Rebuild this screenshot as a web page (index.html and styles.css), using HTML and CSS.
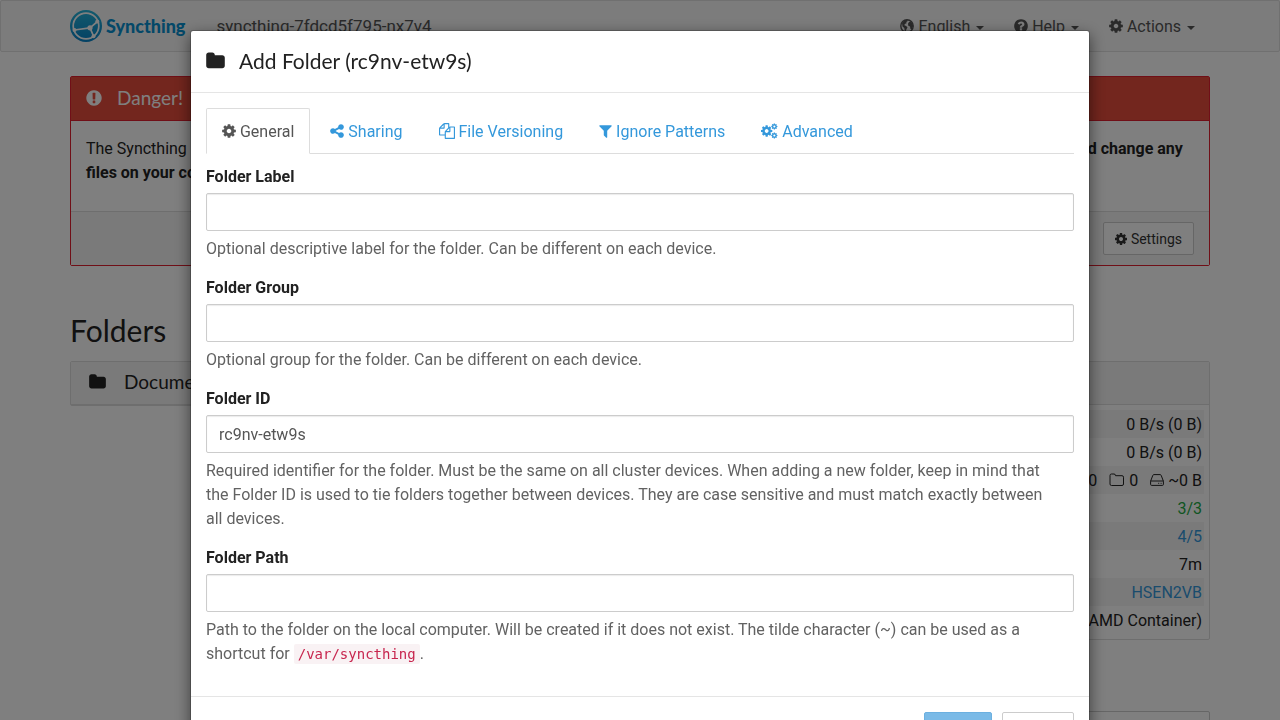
FILE: index.html
```html
<!DOCTYPE html>
<html lang="en">
<head>
	<meta charset="UTF-8">
	<meta name="viewport" content="width=device-width, initial-scale=1">
	<title>Syncthing</title>
	<link rel="stylesheet" href="styles.css">
</head>
<body>
	<!-- icons -->
	<svg class="sprite" aria-hidden="true">
		<linearGradient id="logo-fill" x1="0" y1="0" x2="0" y2="1">
			<stop offset="0" stop-color="#26b6db"/>
			<stop offset="1" stop-color="#0882c8"/>
		</linearGradient>
		<symbol id="cog" viewBox="128 0 1536 1792">
			<path id="cog-path" d="M1152 896q0-106-75-181t-181-75-181 75-75 181 75 181 181 75 181-75 75-181zm512-109v222q0 12-8 23t-20 13l-185 28q-19 54-39 91 35 50 107 138 10 12 10 25t-9 23q-27 37-99 108t-94 71q-12 0-26-9l-138-108q-44 23-91 38-16 136-29 186-7 28-36 28h-222q-14 0-24.5-8.5t-11.5-21.5l-28-184q-49-16-90-37l-141 107q-10 9-25 9-14 0-25-11-126-114-165-168-7-10-7-23 0-12 8-23 15-21 51-66.5t54-70.5q-27-50-41-99l-183-27q-13-2-21-12.5t-8-23.5v-222q0-12 8-23t19-13l186-28q14-46 39-92-40-57-107-138-10-12-10-24 0-10 9-23 26-36 98.5-107.5t94.5-71.5q13 0 26 10l138 107q44-23 91-38 16-136 29-186 7-28 36-28h222q14 0 24.5 8.5t11.5 21.5l28 184q49 16 90 37l142-107q9-9 24-9 13 0 25 10 129 119 165 170 7 8 7 22 0 12-8 23-15 21-51 66.5t-54 70.5q26 50 41 98l183 28q13 2 21 12.5t8 23.5z"/>
		</symbol>
		<symbol id="cogs" viewBox="0 0 1920 1792">
			<use href="#cog-path" transform="translate(-106 152) scale(.83)"/>
			<use href="#cog-path" transform="translate(1105 -20) scale(.45)"/>
			<use href="#cog-path" transform="translate(1105 1000) scale(.45)"/>
		</symbol>
		<symbol id="share" viewBox="128 0 1536 1792">
			<path d="M1344 1024q133 0 226.500 93.500t93.500 226.500-93.500 226.500-226.500 93.500-226.500-93.500-93.500-226.500q0-12 2-34l-360-180q-92 86-218 86-133 0-226.500-93.500t-93.500-226.500 93.500-226.500 226.500-93.500q126 0 218 86l360-180q-2-22-2-34 0-133 93.500-226.500t226.500-93.500 226.500 93.500 93.500 226.500-93.500 226.500-226.500 93.500q-126 0-218-86l-360 180q2 22 2 34t-2 34l360 180q92-86 218-86z"/>
		</symbol>
		<symbol id="copy" viewBox="0 0 1792 1792">
			<path d="M1696 384q40 0 68 28t28 68v1216q0 40-28 68t-68 28h-960q-40 0-68-28t-28-68v-288h-544q-40 0-68-28t-28-68v-672q0-40 20-88t48-76l408-408q28-28 76-48t88-20h416q40 0 68 28t28 68v328q68-40 128-40h416zm-544 213l-299 299h299v-299zm-640-384l-299 299h299v-299zm196 647l316-316v-416h-384v416q0 40-28 68t-68 28h-416v640h512v-256q0-40 20-88t48-76zm956 804v-1152h-384v416q0 40-28 68t-68 28h-416v640h896z"/>
		</symbol>
		<symbol id="filter" viewBox="192 0 1408 1792">
			<path d="M1595 295q17 41-14 70l-493 493v742q0 42-39 59-13 5-25 5-27 0-45-19l-256-256q-19-19-19-45v-486l-493-493q-31-29-14-70 17-39 59-39h1280q42 0 59 39z"/>
		</symbol>
		<symbol id="question" viewBox="128 0 1536 1792">
			<path d="M1024 1376v-192q0-14-9-23t-23-9h-192q-14 0-23 9t-9 23v192q0 14 9 23t23 9h192q14 0 23-9t9-23zm256-672q0-88-55.500-163t-138.500-116-170-41q-243 0-371 213-15 24 8 42l132 100q7 6 19 6 16 0 25-12 53-68 86-92 34-24 86-24 48 0 85.500 26t37.500 59q0 38-20 61t-68 45q-63 28-115.500 86.500t-52.500 125.500v36q0 14 9 23t23 9h192q14 0 23-9t9-23q0-19 21.500-49.500t54.500-49.500q32-18 49-28.500t46-35 44.500-48 28-60.500 12.500-81zm384 192q0 209-103 385.500t-279.500 279.500-385.500 103-385.500-103-279.500-279.500-103-385.500 103-385.500 279.500-279.500 385.500-103 385.500 103 279.500 279.500 103 385.500z"/>
		</symbol>
		<symbol id="exclamation" viewBox="128 0 1536 1792">
			<path d="M896 128q209 0 385.500 103t279.500 279.500 103 385.500-103 385.500-279.500 279.500-385.500 103-385.500-103-279.500-279.500-103-385.500 103-385.500 279.500-279.500 385.500-103zm128 1247v-190q0-14-9-23.500t-22-9.500h-192q-13 0-23 10t-10 23v190q0 13 10 23t23 10h192q13 0 22-9.500t9-23.500zm-2-344l18-621q0-12-10-18-10-8-24-8h-220q-14 0-24 8-10 6-10 18l17 621q0 10 10 17.500t24 7.500h185q14 0 23.500-7.500t10.500-17.500z"/>
		</symbol>
		<symbol id="folder" viewBox="64 0 1664 1792">
			<path d="M1728 608v704q0 92-66 158t-158 66h-1216q-92 0-158-66t-66-158v-960q0-92 66-158t158-66h320q92 0 158 66t66 158v32h672q92 0 158 66t66 158z"/>
		</symbol>
		<symbol id="globe" viewBox="0 0 14 16">
			<circle cx="7" cy="8" r="6.200" fill="none" stroke="currentColor" stroke-width="1.400"/>
			<path d="M2 5l2.500-2.800 2.700-.4.600 1.200-1.500 1 .3 1.200-1.800.7-.4 1.300 1.700.8 1.400 1.200-.9 1.700-.9 2.300-1-.3-.4-2.900-1.800-1.400zM8.800 4.200l1.800-1 2 2.600.6 2.200-1.500 3.500-1.300-.8-.4-2.300-1.700-.6-.3-2z"/>
		</symbol>
		<symbol id="folder-open" viewBox="0 0 16 16">
			<path d="M1 3.500q0-1.500 1.500-1.500h2.500q1.500 0 1.500 1.700h6.500q1.500 0 1.500 1.500v6.800q0 1.500-1.500 1.500h-10.500q-1.500 0-1.500-1.500z" fill="none" stroke="currentColor"/>
		</symbol>
		<symbol id="disk" viewBox="0 0 14 16">
			<path d="M.6 9.200l2.200-5.800q.3-.8 1.200-.8h6q.9 0 1.200.8l2.200 5.800v3.200q0 1-1 1h-10.800q-1 0-1-1zM.6 9h12.800M8.200 11.300h1M10.600 11.300h1" fill="none" stroke="currentColor"/>
		</symbol>
	</svg>

	<!-- top bar -->
	<nav class="navbar">
		<div class="container">
			<a class="brand" href="#">
				<svg class="logo" viewBox="0 0 32 32" aria-hidden="true">
					<circle cx="16" cy="16" r="16" fill="url(#logo-fill)"/>
					<circle cx="16" cy="16" r="12.800" fill="none" stroke="#fff" stroke-width="1.700"/>
					<path d="M20 17.800L27.500 11.500M20 17.800L23.500 26M20 17.800L4.500 20" fill="none" stroke="#fff" stroke-width="1.700"/>
					<circle cx="20" cy="17.800" r="2.600" fill="#fff"/>
					<circle cx="27.300" cy="11.500" r="2" fill="#fff"/>
					<circle cx="23.500" cy="26.200" r="2" fill="#fff"/>
					<circle cx="4.500" cy="20" r="2" fill="#fff"/>
				</svg>
				<span>Syncthing</span>
			</a>
			<p class="device-name">syncthing-7fdcd5f795-nx7v4</p>
			<ul class="nav">
				<li><a href="#"><svg class="icon"><use href="#globe"/></svg> English <b class="caret"></b></a></li>
				<li><a href="#"><svg class="icon"><use href="#question"/></svg> Help <b class="caret"></b></a></li>
				<li><a href="#"><svg class="icon"><use href="#cog"/></svg> Actions <b class="caret"></b></a></li>
			</ul>
		</div>
	</nav>

	<main class="container">
		<section class="panel panel-danger">
			<h3 class="panel-heading"><svg class="icon"><use href="#exclamation"/></svg>Danger!</h3>
			<div class="panel-body">
				<p>The Syncthing admin interface is configured to allow remote access without a valid password. <strong>This can easily give hackers access to read and change any files on your computer.</strong></p>
			</div>
			<div class="panel-footer">
				<button type="button" class="btn btn-sm"><svg class="icon"><use href="#cog"/></svg> Settings</button>
			</div>
		</section>

		<div class="row">
			<section>
				<h2>Folders</h2>
				<div class="panel">
					<h3 class="panel-heading"><svg class="icon icon-fw"><use href="#folder"/></svg>Documents</h3>
				</div>
			</section>
			<section>
				<h2>This Device</h2>
				<div class="panel">
					<h3 class="panel-heading">syncthing</h3>
					<table class="stats">
						<tr><th>Download Rate</th><td>0 B/s (0 B)</td></tr>
						<tr><th>Upload Rate</th><td>0 B/s (0 B)</td></tr>
						<tr>
							<th>Local State (Total)</th>
							<td>
								<span>0</span>
								<span><svg class="icon icon-wide"><use href="#folder-open"/></svg> 0</span>
								<span><svg class="icon"><use href="#disk"/></svg> ~0 B</span>
							</td>
						</tr>
						<tr><th>Listeners</th><td class="success">3/3</td></tr>
						<tr><th>Discovery</th><td><a href="#">4/5</a></td></tr>
						<tr><th>Uptime</th><td>7m</td></tr>
						<tr><th>Identification</th><td><a href="#">HSEN2VB</a></td></tr>
						<tr><th>Version</th><td>Linux (64-bit Intel/AMD Container)</td></tr>
					</table>
				</div>
				<h2>Remote Devices</h2>
				<div class="actions">
					<button type="button" class="btn">Add Remote Device</button>
				</div>
			</section>
		</div>
	</main>

	<!-- add folder dialog -->
	<div class="backdrop">
		<form class="modal" role="dialog" aria-labelledby="modal-title">
			<h4 class="modal-header" id="modal-title"><svg class="icon"><use href="#folder"/></svg>Add Folder (rc9nv-etw9s)</h4>
			<div class="modal-body">
				<ul class="tabs">
					<li><a class="active" href="#"><svg class="icon"><use href="#cog"/></svg> General</a></li>
					<li><a href="#"><svg class="icon"><use href="#share"/></svg> Sharing</a></li>
					<li><a href="#"><svg class="icon icon-wide"><use href="#copy"/></svg> File Versioning</a></li>
					<li><a href="#"><svg class="icon icon-slim"><use href="#filter"/></svg> Ignore Patterns</a></li>
					<li><a href="#"><svg class="icon icon-cogs"><use href="#cogs"/></svg> Advanced</a></li>
				</ul>
				<div class="form-group">
					<label for="folder-label">Folder Label</label>
					<input id="folder-label" type="text">
					<p>Optional descriptive label for the folder. Can be different on each device.</p>
				</div>
				<div class="form-group">
					<label for="folder-group">Folder Group</label>
					<input id="folder-group" type="text">
					<p>Optional group for the folder. Can be different on each device.</p>
				</div>
				<div class="form-group">
					<label for="folder-id">Folder ID</label>
					<input id="folder-id" type="text" value="rc9nv-etw9s">
					<p>Required identifier for the folder. Must be the same on all cluster devices. When adding a new folder, keep in mind that the Folder ID is used to tie folders together between devices. They are case sensitive and must match exactly between all devices.</p>
				</div>
				<div class="form-group">
					<label for="folder-path">Folder Path</label>
					<input id="folder-path" type="text">
					<p>Path to the folder on the local computer. Will be created if it does not exist. The tilde character (~) can be used as a shortcut for <code>/var/syncthing</code>.</p>
				</div>
			</div>
			<div class="modal-footer">
				<button type="button" class="btn btn-primary" disabled>Save</button>
				<button type="button" class="btn">Close</button>
			</div>
		</form>
	</div>
</body>
</html>
```

FILE: styles.css
```css
* {
	box-sizing: border-box;
}
body, ul, p, h2, h3, h4 {
	margin: 0;
	padding: 0;
}
body {
	font: 16px/24px Roboto, "Liberation Sans", sans-serif;
	color: #222;
	background: #fff;
	height: 100vh;
	overflow: hidden;
}
ul {
	list-style: none;
}
a {
	color: #3498db;
	text-decoration: none;
}
h2, h3, h4 {
	font-family: Lato, sans-serif;
	font-weight: 400;
}
.sprite {
	position: absolute;
	width: 0;
	height: 0;
}
.icon {
	width: 14px;
	height: 16px;
	fill: currentColor;
	vertical-align: -2px;
}
.icon-wide {
	width: 16px;
}
.icon-slim {
	width: 13px;
}
.icon-cogs {
	width: 17px;
}
.container {
	max-width: 1170px;
	margin: 0 auto;
	padding: 0 15px;
}

/* top bar */
.navbar {
	background: #f8f8f8;
	border: 1px solid #e0e0e0;
	border-radius: 2px;
	margin-bottom: 24px;
}
.navbar .container {
	display: flex;
	align-items: center;
	height: 50px;
}
.brand {
	display: flex;
	align-items: center;
	gap: 4px;
	color: #0891d1;
	font: 900 18px/24px Lato, sans-serif;
}
.logo {
	width: 32px;
	height: 32px;
}
.device-name {
	margin-left: 31px;
	font-size: 17px;
	color: #555;
}
.nav {
	display: flex;
	margin-left: auto;
}
.nav a {
	display: block;
	padding: 14px 15px 12px;
	color: #555;
}
.caret {
	display: inline-block;
	margin-left: 2px;
	border: 4px solid transparent;
	border-top-color: currentColor;
	border-bottom: 0;
	vertical-align: middle;
}

/* panels */
.panel {
	border: 1px solid #ddd;
	border-radius: 2px;
	margin-bottom: 24px;
}
.panel-heading {
	display: flex;
	align-items: center;
	gap: 15px;
	height: 43px;
	padding: 0 15px 2px;
	font-size: 19px;
	background: #f5f5f5;
	border-bottom: 1px solid #ddd;
}
.panel-heading .icon {
	width: 16px;
	height: 18px;
}
.panel-heading .icon-fw {
	width: 23px;
}
.panel-danger {
	border-color: #e01e2e;
}
.panel-danger .panel-heading {
	height: 44px;
	color: #fff;
	background: #e74c3c;
	border-color: #e01e2e;
}
.panel-body {
	padding: 16px 15px 26px;
}
.panel-body p {
	min-height: 48px;
}
.panel-footer {
	display: flex;
	justify-content: flex-end;
	padding: 10px 15px;
	background: #f5f5f5;
	border-top: 1px solid #ddd;
}
.btn {
	height: 38px;
	padding: 0 15px;
	font: inherit;
	color: #555;
	background: #fff;
	border: 1px solid #ccc;
	border-radius: 2px;
}
.btn-sm {
	height: 33px;
	padding: 0 11px;
	font-size: 14px;
	color: #333;
}
.btn-sm .icon {
	width: 12px;
	height: 14px;
}
.btn-primary {
	padding: 0 16px;
	color: #fff;
	background: #7abae7;
	border-color: #6cb0e0;
}
.row {
	display: grid;
	grid-template-columns: 1fr 1fr;
	gap: 30px;
	margin-top: 48px;
}
.actions {
	display: flex;
	justify-content: flex-end;
}
h2 {
	margin-bottom: 15px;
	font-size: 30px;
	line-height: 32px;
}
.stats {
	width: calc(100% - 10px);
	margin: 5px;
	border-collapse: collapse;
}
.stats tr:nth-child(odd) {
	background: #f5f5f5;
}
.stats th, .stats td {
	padding: 3px 2px 1px;
	font-weight: 400;
	text-align: left;
}
.stats td {
	text-align: right;
}
.stats span {
	margin-left: 8px;
}
.success {
	color: #22aa44;
}

/* dialog */
.backdrop {
	position: fixed;
	inset: 0;
	padding: 30px 10px;
	background: rgba(0, 0, 0, .5);
	overflow-y: auto;
	scrollbar-width: none;
}
.modal {
	max-width: 900px;
	margin: 0 auto;
	background: #fff;
	background-clip: padding-box;
	border: 1px solid rgba(0, 0, 0, .2);
	border-radius: 3px;
	box-shadow: 0 5px 15px rgba(0, 0, 0, .5);
}
.modal-header {
	display: flex;
	align-items: center;
	gap: 14px;
	padding: 14px 15px 16px;
	font-size: 21px;
	line-height: 31px;
	border-bottom: 1px solid #e5e5e5;
}
.modal-header .icon {
	width: 19px;
	height: 20px;
}
.modal-body {
	padding: 15px;
}
.tabs {
	display: flex;
	gap: 4px;
	margin-bottom: 11px;
	border-bottom: 1px solid #ddd;
}
.tabs a {
	display: block;
	margin-bottom: -1px;
	padding: 11px 15px 9px;
	border: 1px solid transparent;
	border-radius: 2px 2px 0 0;
}
.tabs .active {
	color: #555;
	background: #fff;
	border-color: #ddd #ddd #fff;
}
.form-group {
	margin-bottom: 15px;
}
.form-group label {
	display: block;
	margin-bottom: 4px;
	font-weight: 700;
}
.form-group input {
	display: block;
	width: 100%;
	height: 38px;
	padding: 6px 12px;
	font: inherit;
	color: #555;
	border: 1px solid #ccc;
	border-radius: 2px;
	box-shadow: inset 0 1px 1px rgba(0, 0, 0, .08);
}
.form-group p {
	margin-top: 6px;
	padding-right: 16px;
	color: #626262;
}
code {
	padding: 2px 4px;
	font: 14px "DejaVu Sans Mono", monospace;
	color: #c7254e;
	background: #f9f2f4;
	border-radius: 2px;
}
.modal-footer {
	display: flex;
	justify-content: flex-end;
	gap: 10px;
	padding: 15px;
	border-top: 1px solid #e5e5e5;
}
```
